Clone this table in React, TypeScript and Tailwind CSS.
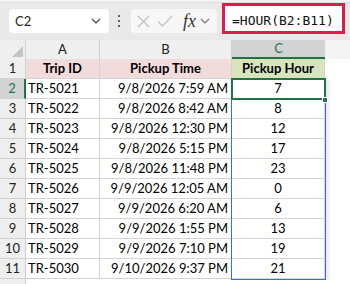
import React from 'react';

const rows = [
  { id: 'TR-5021', time: '9/8/2026 7:59 AM', hour: 7 },
  { id: 'TR-5022', time: '9/8/2026 8:42 AM', hour: 8 },
  { id: 'TR-5023', time: '9/8/2026 12:30 PM', hour: 12 },
  { id: 'TR-5024', time: '9/8/2026 5:15 PM', hour: 17 },
  { id: 'TR-5025', time: '9/8/2026 11:48 PM', hour: 23 },
  { id: 'TR-5026', time: '9/9/2026 12:05 AM', hour: 0 },
  { id: 'TR-5027', time: '9/9/2026 6:20 AM', hour: 6 },
  { id: 'TR-5028', time: '9/9/2026 1:55 PM', hour: 13 },
  { id: 'TR-5029', time: '9/9/2026 7:10 PM', hour: 19 },
  { id: 'TR-5030', time: '9/10/2026 9:37 PM', hour: 21 },
];

function Chevron({ className }: { className?: string }) {
  return (
    <svg width="10" height="6" viewBox="0 0 10 6" className={className}>
      <path d="M1 1l4 4 4-4" fill="none" stroke="currentColor" strokeWidth="1.2" />
    </svg>
  );
}

export default function App() {
  return (
    <div className="w-[350px] h-[284px] overflow-hidden bg-white font-['Lato',sans-serif] text-black">
      {/* Formula bar */}
      <div className="h-[3px] bg-[#f3f3f3] border-b border-[#dedede]" />
      <div className="h-[37px] bg-[#e9e9e9] flex items-start">
        <div className="mt-[6px] ml-[9px] w-[100px] h-[24px] bg-white rounded-[4px] flex items-center justify-between pl-[6px] pr-[8px]">
          <span className="text-[13px] text-[#1f1f1f] leading-none">C2</span>
          <Chevron className="text-[#444]" />
        </div>
        <div className="mt-[12px] ml-[8px] w-[4px] flex flex-col items-center gap-[3px]">
          <span className="w-[2px] h-[2px] bg-[#333] rounded-full" />
          <span className="w-[2px] h-[2px] bg-[#333] rounded-full" />
          <span className="w-[2px] h-[2px] bg-[#333] rounded-full" />
        </div>
        <div className="mt-[6px] ml-[10px] w-[86px] h-[24px] bg-[#f7f7f7] rounded-[4px] flex items-center pl-[6px]">
          <svg width="13" height="13" viewBox="0 0 13 13">
            <path d="M1 1l11 11M12 1L1 12" stroke="#bcbcbc" strokeWidth="1.1" fill="none" />
          </svg>
          <svg width="16" height="12" viewBox="0 0 16 12" className="ml-[7px]">
            <path d="M1 6.5l4.5 4.5L15 1" stroke="#bcbcbc" strokeWidth="1.1" fill="none" />
          </svg>
          <span className="ml-[10px] font-['Liberation_Serif',serif] italic text-[18px] leading-none text-[#333]">fx</span>
          <Chevron className="ml-[4px] text-[#777]" />
        </div>
        <div className="mt-0 ml-[5px] w-[123px] h-[31px] border-[3px] border-[#e31b4b] bg-white flex items-center pl-[7px] pt-[4px]">
          <span className="font-['DejaVu_Sans_Mono',monospace] text-[13px] leading-none text-[#111]">=HOUR(B2:B11)</span>
        </div>
      </div>

      {/* Grid */}
      <div className="relative">
        <div className="flex h-[19px] bg-[#efefef] text-[13px] text-[#222]">
          <div className="w-[26px] border-r border-[#d0d0d0] flex items-end justify-end">
            <svg width="11" height="11" viewBox="0 0 11 11" className="mb-[2px] mr-[2px]">
              <path d="M11 0L11 11L0 11Z" fill="#c4c4c4" />
            </svg>
          </div>
          <div className="w-[74px] border-r border-[#d0d0d0] flex items-center justify-center">A</div>
          <div className="w-[132px] border-r border-[#d0d0d0] flex items-center justify-center">B</div>
          <div className="w-[93px] bg-[#d3d3d3] border-b-2 border-[#217346] text-[#217346] flex items-center justify-center">C</div>
          <div className="flex-1 bg-[#f4f4f4]" />
        </div>

        <div className="flex h-[20px] text-[13px]">
          <div className="w-[26px] bg-[#efefef] border-r border-b border-[#d0d0d0] flex items-center justify-center text-[#222]">1</div>
          <div className="w-[74px] bg-[#f2dcdb] border-r border-b border-[#d4d4d4] flex items-center justify-center font-bold">Trip ID</div>
          <div className="w-[132px] bg-[#f2dcdb] border-r border-b border-[#d4d4d4] flex items-center justify-center font-bold">Pickup Time</div>
          <div className="w-[93px] bg-[#d8e4bc] border-r border-b border-[#d4d4d4] flex items-center justify-center font-bold">Pickup Hour</div>
          <div className="flex-1" />
        </div>

        {rows.map((r, i) => (
          <div key={r.id} className="flex h-[20px] text-[13px]">
            <div
              className={
                i === 0
                  ? 'w-[26px] bg-[#d3d3d3] border-r-2 border-r-[#217346] border-b border-b-[#d0d0d0] flex items-center justify-center text-[#217346]'
                  : 'w-[26px] bg-[#efefef] border-r border-b border-[#d0d0d0] flex items-center justify-center text-[#222]'
              }
            >
              {i + 2}
            </div>
            <div className="w-[74px] border-r border-b border-[#d4d4d4] flex items-center pl-[2px]">{r.id}</div>
            <div className="w-[132px] border-r border-b border-[#d4d4d4] flex items-center justify-end pr-[3px]">{r.time}</div>
            <div className="w-[93px] border-r border-b border-[#d4d4d4] flex items-center justify-center">{r.hour}</div>
            <div className="flex-1" />
          </div>
        ))}
        <div className="flex h-[10px]">
          <div className="w-[26px] bg-[#efefef] border-r border-[#d0d0d0]" />
        </div>

        {/* spill range border */}
        <div className="absolute left-[231px] top-[39px] w-[95px] h-[201px] border border-[#3a6fcb] pointer-events-none" />
        <div className="absolute left-[326px] top-[40px] w-[5px] h-[200px] bg-gradient-to-r from-[#e6e6e6] to-transparent" />
        {/* active cell */}
        <div className="absolute left-[231px] top-[38px] w-[95px] h-[22px] border-2 border-[#217346] pointer-events-none" />
        <div className="absolute left-[322px] top-[57px] w-[6px] h-[6px] bg-[#217346] border border-white" />
      </div>
    </div>
  );
}
